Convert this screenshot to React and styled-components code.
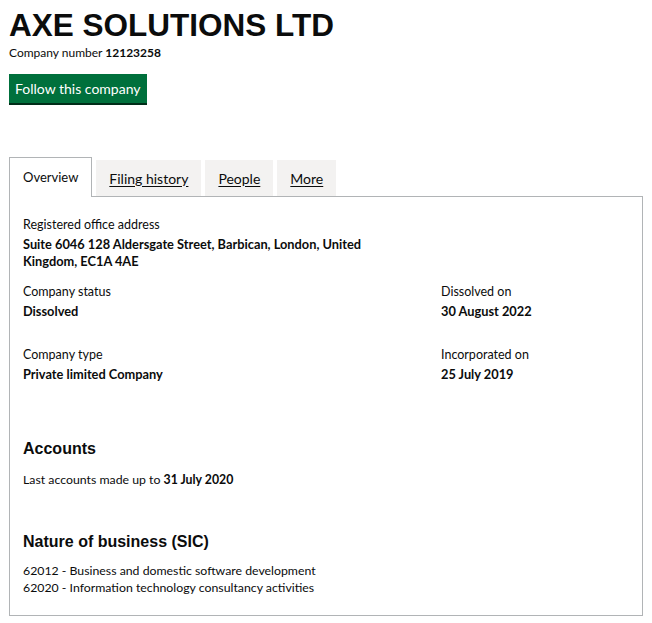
import React from 'react'
import styled, {createGlobalStyle} from 'styled-components'

const GlobalStyle = createGlobalStyle`
  body {
    margin: 0;
    background: #ffffff;
    color: #0b0c0c;
    font-family: Lato, "Noto Sans", Arial, sans-serif;
  }
`

const tabs = [
  {name: 'Overview', active: true},
  {name: 'Filing history'},
  {name: 'People'},
  {name: 'More'}
]

const Page = styled.main`
  padding: 9px 9px 0 9px;
  width: 634px;
`

const Title = styled.h1`
  margin: 0;
  font-family: "Liberation Sans", Arial, sans-serif;
  font-weight: 700;
  font-size: 31.5px;
  line-height: 32px;
`

const CompanyNumber = styled.p`
  margin: 4px 0 0;
  font-size: 12px;
  line-height: 16px;

  strong {
    font-weight: 700;
  }
`

const FollowButton = styled.button`
  margin-top: 13px;
  height: 29px;
  padding: 0 6px;
  border: none;
  background: #00703c;
  box-shadow: 0 2px 0 #002d18;
  color: #ffffff;
  font-family: inherit;
  font-size: 14px;
  cursor: pointer;
`

const TabList = styled.nav`
  display: flex;
  align-items: flex-end;
  gap: 4px;
  margin-top: 54px;
  position: relative;
  z-index: 1;
`

const Tab = styled.a`
  display: flex;
  align-items: center;
  justify-content: center;
  box-sizing: border-box;
  color: #0b0c0c;
  font-size: 14px;
  text-decoration: underline;
  text-underline-offset: 2px;
  background: #f3f2f1;
  height: 36px;
  padding: 0 13px;

  ${({active}) =>
    active &&
    `
    background: #ffffff;
    font-size: 13px;
    text-decoration: none;
    border: 1px solid #b1b4b6;
    border-bottom: none;
    height: 40px;
    margin-bottom: -1px;
    padding-bottom: 2px;
  `}
`

const Panel = styled.section`
  border: 1px solid #b1b4b6;
  padding: 19px 13px 19px;
`

const Grid = styled.div`
  display: grid;
  grid-template-columns: 418px 1fr;
  row-gap: 26px;
  margin-top: 13px;
`

const Field = styled.dl`
  margin: 0;
`

const Label = styled.dt`
  font-size: 12.5px;
  line-height: 17px;
`

const Value = styled.dd`
  margin: 3px 0 0;
  font-size: 12.8px;
  line-height: 17px;
  font-weight: 700;
`

const Heading = styled.h2`
  margin: ${({top}) => top}px 0 0;
  font-family: "Liberation Sans", Arial, sans-serif;
  font-size: 16px;
  line-height: 20px;
  font-weight: 700;
`

const Text = styled.p`
  margin: ${({top}) => top}px 0 0;
  font-size: 12.3px;
  line-height: 17px;

  strong {
    font-weight: 700;
  }
`

const App = () => {
  return (
    <Page>
      <GlobalStyle />
      <Title>AXE SOLUTIONS LTD</Title>
      <CompanyNumber>
        Company number <strong>12123258</strong>
      </CompanyNumber>
      <FollowButton>Follow this company</FollowButton>

      <TabList>
        {tabs.map((tab) => (
          <Tab key={tab.name} active={tab.active}>
            {tab.name}
          </Tab>
        ))}
      </TabList>

      <Panel>
        <Field>
          <Label>Registered office address</Label>
          <Value>
            Suite 6046 128 Aldersgate Street, Barbican, London, United
            <br />
            Kingdom, EC1A 4AE
          </Value>
        </Field>

        <Grid>
          <Field>
            <Label>Company status</Label>
            <Value>Dissolved</Value>
          </Field>
          <Field>
            <Label>Dissolved on</Label>
            <Value>30 August 2022</Value>
          </Field>
          <Field>
            <Label>Company type</Label>
            <Value>Private limited Company</Value>
          </Field>
          <Field>
            <Label>Incorporated on</Label>
            <Value>25 July 2019</Value>
          </Field>
        </Grid>

        <Heading top={56}>Accounts</Heading>
        <Text top={12}>
          Last accounts made up to <strong>31 July 2020</strong>
        </Text>

        <Heading top={44}>Nature of business (SIC)</Heading>
        <Text top={10}>
          62012 - Business and domestic software development
          <br />
          62020 - Information technology consultancy activities
        </Text>
      </Panel>
    </Page>
  )
}

export default App
